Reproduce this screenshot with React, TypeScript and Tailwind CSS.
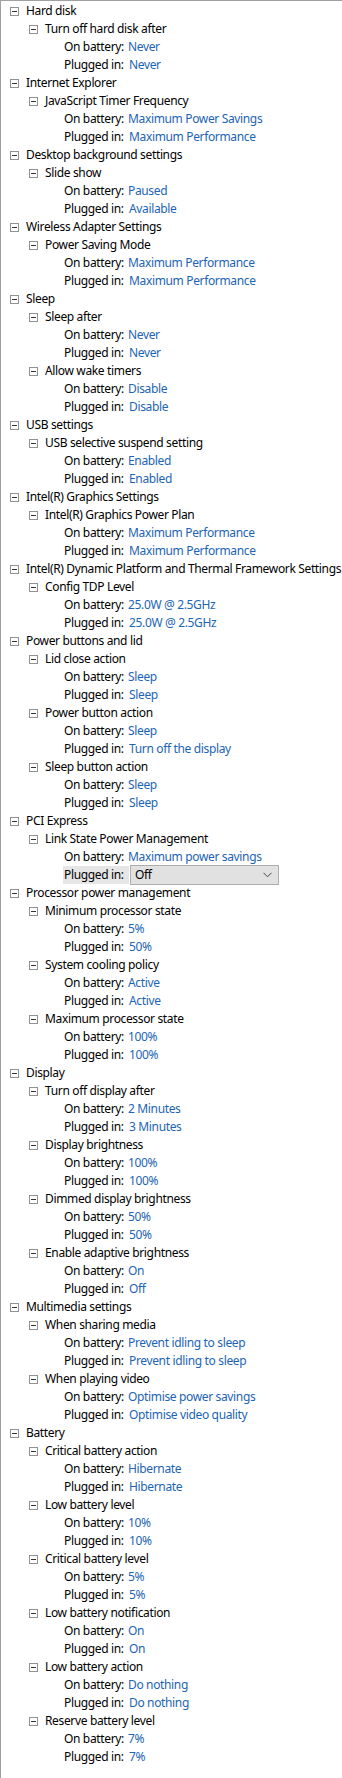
import React from "react";

type Setting = { name: string; on: string; plugged: string; dropdown?: boolean };
type Group = { name: string; items: Setting[] };

const data: Group[] = [
  { name: "Hard disk", items: [{ name: "Turn off hard disk after", on: "Never", plugged: "Never" }] },
  { name: "Internet Explorer", items: [{ name: "JavaScript Timer Frequency", on: "Maximum Power Savings", plugged: "Maximum Performance" }] },
  { name: "Desktop background settings", items: [{ name: "Slide show", on: "Paused", plugged: "Available" }] },
  { name: "Wireless Adapter Settings", items: [{ name: "Power Saving Mode", on: "Maximum Performance", plugged: "Maximum Performance" }] },
  {
    name: "Sleep",
    items: [
      { name: "Sleep after", on: "Never", plugged: "Never" },
      { name: "Allow wake timers", on: "Disable", plugged: "Disable" },
    ],
  },
  { name: "USB settings", items: [{ name: "USB selective suspend setting", on: "Enabled", plugged: "Enabled" }] },
  { name: "Intel(R) Graphics Settings", items: [{ name: "Intel(R) Graphics Power Plan", on: "Maximum Performance", plugged: "Maximum Performance" }] },
  { name: "Intel(R) Dynamic Platform and Thermal Framework Settings", items: [{ name: "Config TDP Level", on: "25.0W @ 2.5GHz", plugged: "25.0W @ 2.5GHz" }] },
  {
    name: "Power buttons and lid",
    items: [
      { name: "Lid close action", on: "Sleep", plugged: "Sleep" },
      { name: "Power button action", on: "Sleep", plugged: "Turn off the display" },
      { name: "Sleep button action", on: "Sleep", plugged: "Sleep" },
    ],
  },
  { name: "PCI Express", items: [{ name: "Link State Power Management", on: "Maximum power savings", plugged: "Off", dropdown: true }] },
  {
    name: "Processor power management",
    items: [
      { name: "Minimum processor state", on: "5%", plugged: "50%" },
      { name: "System cooling policy", on: "Active", plugged: "Active" },
      { name: "Maximum processor state", on: "100%", plugged: "100%" },
    ],
  },
  {
    name: "Display",
    items: [
      { name: "Turn off display after", on: "2 Minutes", plugged: "3 Minutes" },
      { name: "Display brightness", on: "100%", plugged: "100%" },
      { name: "Dimmed display brightness", on: "50%", plugged: "50%" },
      { name: "Enable adaptive brightness", on: "On", plugged: "Off" },
    ],
  },
  {
    name: "Multimedia settings",
    items: [
      { name: "When sharing media", on: "Prevent idling to sleep", plugged: "Prevent idling to sleep" },
      { name: "When playing video", on: "Optimise power savings", plugged: "Optimise video quality" },
    ],
  },
  {
    name: "Battery",
    items: [
      { name: "Critical battery action", on: "Hibernate", plugged: "Hibernate" },
      { name: "Low battery level", on: "10%", plugged: "10%" },
      { name: "Critical battery level", on: "5%", plugged: "5%" },
      { name: "Low battery notification", on: "On", plugged: "On" },
      { name: "Low battery action", on: "Do nothing", plugged: "Do nothing" },
      { name: "Reserve battery level", on: "7%", plugged: "7%" },
    ],
  },
];

function Box() {
  return (
    <svg width="9" height="9" viewBox="0 0 9 9" className="shrink-0">
      <rect x="0.5" y="0.5" width="8" height="8" fill="#ffffff" stroke="#919191" />
      <line x1="2" y1="4.5" x2="7" y2="4.5" stroke="#333333" />
    </svg>
  );
}

function Row({ children, className = "" }: { children: React.ReactNode; className?: string }) {
  return <div className={"flex h-[18px] items-center whitespace-nowrap " + className}>{children}</div>;
}

export default function App() {
  return (
    <div
      className="w-[342px] h-[1778px] bg-white border-l border-t border-[#a0a0a0] pt-[1px] text-[12px] leading-[18px] tracking-[-0.35px] text-black overflow-hidden"
      style={{ fontFamily: '"Noto Sans", "Open Sans", sans-serif' }}
    >
      {data.map((g) => (
        <div key={g.name}>
          <Row className="pl-[9px]">
            <Box />
            <span className="ml-[7px]">{g.name}</span>
          </Row>
          {g.items.map((s) => (
            <div key={s.name}>
              <Row className="pl-[28px]">
                <Box />
                <span className="ml-[7px]">{s.name}</span>
              </Row>
              <Row className="pl-[63px]">
                <span className="w-[64px] shrink-0">On battery:</span>
                <span className="text-[#1c64b4]">{s.on}</span>
              </Row>
              {s.dropdown ? (
                <Row className="pl-[62px]">
                  <span className="w-[66px] h-[18px] shrink-0 bg-[#e6e6e6] pl-[1px]">Plugged in:</span>
                  <div className="ml-[1px] flex h-[20px] w-[149px] items-center justify-between border border-[#adadad] bg-[#e1e1e1] pl-[4px] pr-[6px]">
                    <span>{s.plugged}</span>
                    <svg width="9" height="6" viewBox="0 0 9 6">
                      <path d="M0.5 0.8 L4.5 4.8 L8.5 0.8" fill="none" stroke="#444" strokeWidth="1" />
                    </svg>
                  </div>
                </Row>
              ) : (
                <Row className="pl-[63px]">
                  <span className="w-[65px] shrink-0">Plugged in:</span>
                  <span className="text-[#1c64b4]">{s.plugged}</span>
                </Row>
              )}
            </div>
          ))}
        </div>
      ))}
    </div>
  );
}
